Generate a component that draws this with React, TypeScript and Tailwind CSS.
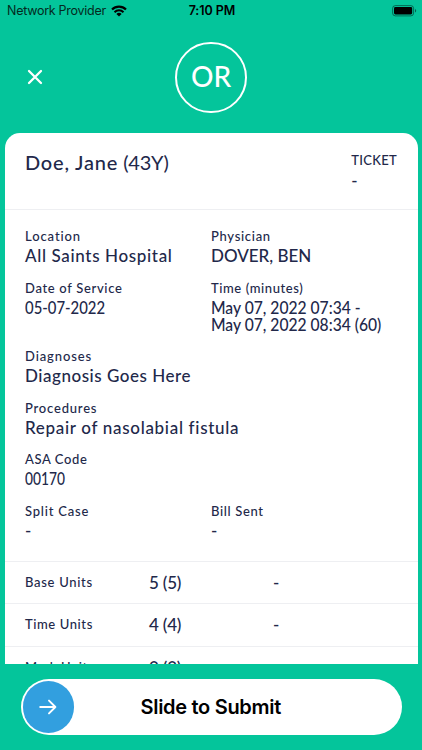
import type { ReactNode } from 'react'

interface FieldProps {
  label: string
  labelClass?: string
  valueClass?: string
  className?: string
  children: ReactNode
}

interface UnitRow {
  label: string
  labelClass: string
  value: string
  extra: string
}

const units: UnitRow[] = [
  { label: 'Base Units', labelClass: 'tracking-[0.7px]', value: '5 (5)', extra: '-' },
  { label: 'Time Units', labelClass: 'tracking-[0.6px]', value: '4 (4)', extra: '-' },
  { label: 'Mod. Units', labelClass: 'tracking-[0.6px]', value: '0 (0)', extra: '-' },
]

function StatusBar() {
  return (
    <div className="grid h-[22px] grid-cols-[1fr_auto_1fr] items-center pr-[5px] pl-[7px] font-['Inter','Liberation_Sans',sans-serif] text-black">
      <div className="flex items-center gap-[5px]">
        <span className="text-[12.5px] font-normal tracking-[-0.27px] whitespace-nowrap text-[#042a20]">Network Provider</span>
        <svg width="16" height="12" viewBox="0 0 16 12" fill="none" stroke="currentColor">
          <path d="M1 4.5a10 10 0 0 1 14 0" strokeWidth="2.2" />
          <path d="M3.5 7.2a6.4 6.4 0 0 1 9 0" strokeWidth="2" />
          <path d="M8 11.6L5.4 9a3.7 3.7 0 0 1 5.2 0z" fill="currentColor" stroke="none" />
        </svg>
      </div>
      <span className="text-[12.5px] font-semibold tracking-[-0.05px] whitespace-nowrap">7:10 PM</span>
      <div className="flex justify-end">
        <svg width="25" height="12" viewBox="0 0 25 12">
          <rect x="0.6" y="0.6" width="21" height="10.3" rx="2.8" fill="none" stroke="#000" strokeOpacity="0.45" />
          <rect x="2" y="2" width="18.2" height="7.5" rx="1.4" fill="#000" />
          <path d="M23 4v3.6c1.6-.6 1.6-3 0-3.6z" fill="#000" fillOpacity="0.5" />
        </svg>
      </div>
    </div>
  )
}

function Field({ label, labelClass = '', valueClass = '', className = '', children }: FieldProps) {
  return (
    <div className={className}>
      <div className={`text-[13px] leading-5 whitespace-nowrap ${labelClass}`}>{label}</div>
      <div className={`mt-px text-[17px] leading-[17px] whitespace-nowrap ${valueClass}`}>{children}</div>
    </div>
  )
}

export default function App() {
  return (
    <div className="flex h-[750px] w-[422px] flex-col overflow-hidden bg-[#04c59b] font-['Lato','Open_Sans',sans-serif] font-medium text-[#22284a]">
      <StatusBar />

      <header className="grid h-[110.5px] grid-cols-[1fr_auto_1fr] items-center px-[27px]">
        <svg width="16" height="16" viewBox="0 0 16 16" stroke="#fff" strokeWidth="2.3" strokeLinecap="round">
          <path d="M2 2l12 12M14 2L2 14" />
        </svg>
        <div className="flex size-[71.5px] items-center justify-center rounded-full border-2 border-white pb-0.5 text-[28px] text-white">
          OR
        </div>
      </header>

      <main className="mx-[4.5px] h-[531.5px] overflow-hidden rounded-t-[15px] bg-white">
        <div className="flex h-[77px] justify-between border-b border-[#eeeff2] pt-[17px] pr-[20.5px] pl-[20.5px]">
          <h1 className="flex gap-[5px] text-[20px] leading-6 whitespace-nowrap">
            <span className="tracking-[0.8px]">Doe, Jane</span>
            <span className="font-normal tracking-[-0.2px]">(43Y)</span>
          </h1>
          <Field label="TICKET" labelClass="tracking-[0.3px]" valueClass="pt-px">-</Field>
        </div>

        <div className="grid h-[352px] grid-cols-[186px_1fr] content-start gap-y-[13.5px] border-b border-[#eeeff2] pt-[16.7px] pl-[20.5px]">
          <Field label="Location" labelClass="tracking-[0.9px]" valueClass="tracking-[0.65px]">All Saints Hospital</Field>
          <Field label="Physician" labelClass="tracking-[0.7px]">DOVER, BEN</Field>
          <Field label="Date of Service" labelClass="tracking-[0.67px]" valueClass="origin-left scale-x-[0.875]">05-07-2022</Field>
          <Field label="Time (minutes)" labelClass="tracking-[0.6px]" valueClass="origin-left scale-x-[0.92]">
            May 07, 2022 07:34 -
            <br />
            May 07, 2022 08:34 (60)
          </Field>
          <Field label="Diagnoses" className="col-span-2" labelClass="tracking-[0.9px]" valueClass="tracking-[0.53px]">Diagnosis Goes Here</Field>
          <Field label="Procedures" className="col-span-2" labelClass="tracking-[0.8px]" valueClass="tracking-[0.69px]">Repair of nasolabial fistula</Field>
          <Field label="ASA Code" className="col-span-2" labelClass="tracking-[0.6px]" valueClass="origin-left scale-x-[0.81]">00170</Field>
          <Field label="Split Case" labelClass="tracking-[0.8px]">-</Field>
          <Field label="Bill Sent" labelClass="tracking-[0.65px]">-</Field>
        </div>

        {units.map(unit => (
          <div key={unit.label} className="grid h-[42.7px] grid-cols-[124px_124px_1fr] items-center border-b border-[#eeeff2] pl-[20.5px]">
            <span className={`text-[13px] ${unit.labelClass}`}>{unit.label}</span>
            <span className="text-[17px] tracking-[-0.2px]">{unit.value}</span>
            <span className="text-[17px]">{unit.extra}</span>
          </div>
        ))}
      </main>

      <footer className="px-[20.5px] pt-[15px]">
        <div className="flex h-[56px] items-center rounded-full bg-white pl-[2px]">
          <div className="flex size-[51.5px] items-center justify-center rounded-full bg-[#329fdf]">
            <svg width="18" height="16" viewBox="0 0 18 16" fill="none" stroke="#fff" strokeWidth="1.9" strokeLinecap="round" strokeLinejoin="round">
              <path d="M1.2 8h15.2M10 1.6L16.4 8 10 14.4" />
            </svg>
          </div>
          <span className="flex-1 pr-[54px] text-center font-['Inter','Liberation_Sans',sans-serif] text-[20px] font-semibold tracking-[-0.3px] text-black">
            Slide to Submit
          </span>
        </div>
      </footer>
    </div>
  )
}
